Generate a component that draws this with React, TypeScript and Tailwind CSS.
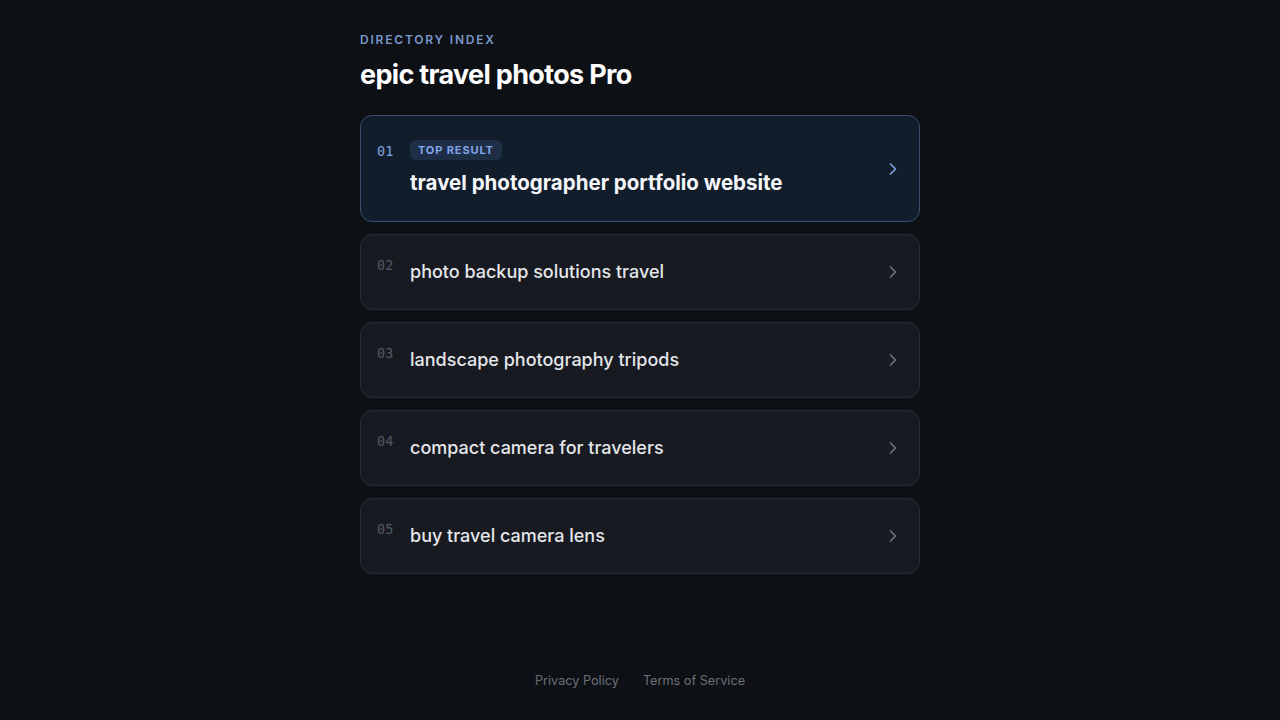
import { ChevronRight } from "lucide-react";

const results = [
  { id: "01", title: "travel photographer portfolio website", top: true },
  { id: "02", title: "photo backup solutions travel", top: false },
  { id: "03", title: "landscape photography tripods", top: false },
  { id: "04", title: "compact camera for travelers", top: false },
  { id: "05", title: "buy travel camera lens", top: false },
];

function ResultCard({ id, title, top }: { id: string; title: string; top: boolean }) {
  return (
    <a
      href="#"
      className={`flex items-center gap-4 rounded-xl border px-4 py-6 ${
        top ? "border-[#3a4e6f] bg-[#121d2c]" : "border-[#262a33] bg-[#171a21]"
      }`}
    >
      <div className="flex min-w-0 flex-1 items-start gap-4">
        <span
          className={`w-[17px] shrink-0 font-['DejaVu_Sans_Mono',monospace] text-[13.5px] leading-none ${
            top ? "mt-[5px] text-[#7ea3e3]" : "mt-0 text-[#515866]"
          }`}
        >
          {id}
        </span>
        <div className="flex min-w-0 flex-col gap-2">
          {top && (
            <span className="self-start rounded-md bg-[#1f2e47] px-2 py-[3px] text-[11px] font-bold leading-[14px] tracking-[0.08em] text-[#80a6e8]">
              TOP RESULT
            </span>
          )}
          <span
            className={`truncate ${
              top
                ? "text-[20.5px] font-bold leading-[29px] text-[#f5f7fa]"
                : "text-lg font-medium leading-[26px] text-[#e4e6ea]"
            }`}
          >
            {title}
          </span>
        </div>
      </div>
      <ChevronRight
        size={20}
        strokeWidth={2}
        className={top ? "shrink-0 text-[#7ea3e3]" : "shrink-0 text-[#6b7080]"}
      />
    </a>
  );
}

export default function App() {
  return (
    <div className="flex h-screen flex-col bg-[#0d1014] font-['Inter','Noto_Sans',sans-serif]">
      <main className="mx-auto w-[560px] pt-8">
        <p className="text-xs font-semibold uppercase leading-4 tracking-[0.15em] text-[#7b98cc]">
          Directory Index
        </p>
        <h1 className="mt-[9px] text-[27px] font-bold leading-9 tracking-[-0.025em] text-white">
          epic travel photos Pro
        </h1>
        <div className="mt-[22px] flex flex-col gap-3">
          {results.map((r) => (
            <ResultCard key={r.id} {...r} />
          ))}
        </div>
      </main>
      <footer className="mt-auto flex justify-center gap-6 pb-[29px] text-[12.7px] leading-5 text-[#6b7079]">
        <a href="#">Privacy Policy</a>
        <a href="#">Terms of Service</a>
      </footer>
    </div>
  );
}
